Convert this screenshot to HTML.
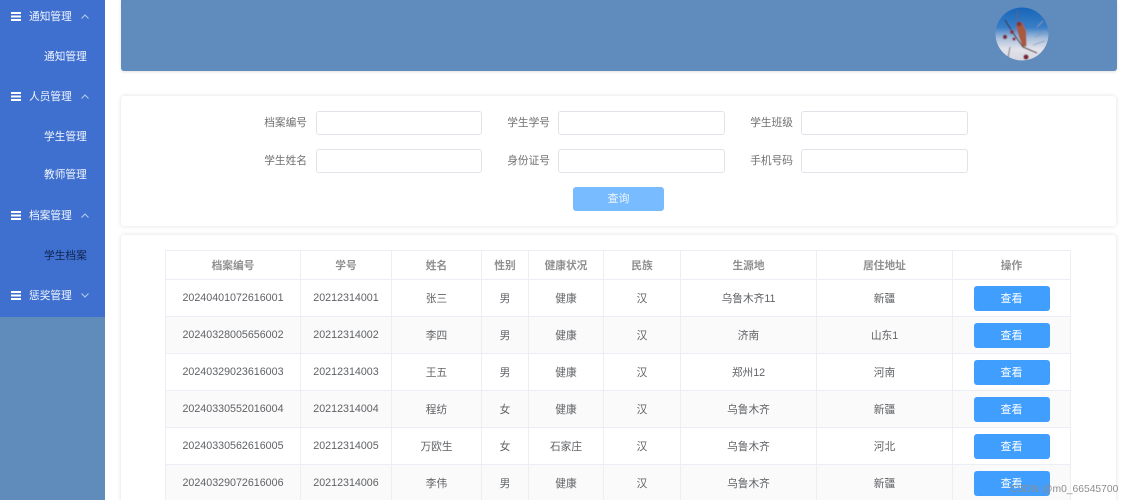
<!DOCTYPE html>
<html lang="zh">
<head>
<meta charset="utf-8">
<title>学生档案</title>
<style>
html,body{margin:0;padding:0;width:1127px;height:500px;overflow:hidden;background:#fff}
body{position:relative;font-family:"Liberation Sans","Noto Sans CJK SC",sans-serif;font-size:10.7px;color:#666}
.a{position:absolute}
.side{left:0;top:0;width:104.5px;height:500px;background:#5f8cbb}
.menu{left:0;top:0;width:104.5px;height:317px;background:#3f70d0}
.m{position:absolute;color:#f2f6fd;line-height:16px;white-space:nowrap}
.ic{position:absolute;left:11px;width:10px;height:9px}
.ar{position:absolute;left:81px;width:8px;height:5px}
.top{left:121px;top:0;width:996px;height:71px;background:#5f8bbd;border-radius:0 0 3px 3px;box-shadow:0 1px 3px rgba(0,0,0,.12)}
.card{left:121px;width:995px;background:#fff;border-radius:3px;box-shadow:0 0 5px rgba(0,0,0,.13)}
.lb{position:absolute;color:#707070;line-height:16px;white-space:nowrap;text-align:right;width:60px}
.in{position:absolute;width:165px;height:22px;border:1px solid #e0e3e8;border-radius:3px;background:#fff}
.btn{left:573px;top:187px;width:91px;height:24px;line-height:25px;text-align:center;background:#79bbff;color:#eef6ff;border-radius:3px;font-size:11px}
table{position:absolute;left:165px;top:250px;border-collapse:collapse;table-layout:fixed;width:905px;font-size:10.7px;color:#666}
th,td{border:1px solid #ebeef5;text-align:center;padding:0;white-space:nowrap;overflow:hidden}
th{height:28px;font-weight:bold;color:#8f8f8f;background:#fff}
td{height:36px;color:#606266}
tr.s td{background:#fafafa}
.v{display:block;position:relative;width:76px;height:25px;line-height:26px;margin:0 auto;background:#409eff;color:#fff;border-radius:3px;font-size:11px}
.wm{left:1010px;top:482.5px;font-size:10.3px;color:#8d8d8d;white-space:nowrap;line-height:14px}
</style>
</head>
<body>
<div class="a side"></div>
<div class="a menu">
  <svg class="ic" style="top:12px" viewBox="0 0 10 9"><path d="M0 0h10v2H0zM0 3.500h10v2H0zM0 7h10v2H0z" fill="#fff"/></svg>
  <div class="m" style="left:29px;top:9px">通知管理</div>
  <svg class="ar" style="top:14px" viewBox="0 0 8 5"><path d="M.5 4.500 4 1l3.500 3.500" fill="none" stroke="#b8ccf0"/></svg>
  <div class="m" style="left:44px;top:49px">通知管理</div>

  <svg class="ic" style="top:92px" viewBox="0 0 10 9"><path d="M0 0h10v2H0zM0 3.500h10v2H0zM0 7h10v2H0z" fill="#fff"/></svg>
  <div class="m" style="left:29px;top:89px">人员管理</div>
  <svg class="ar" style="top:94px" viewBox="0 0 8 5"><path d="M.5 4.500 4 1l3.500 3.500" fill="none" stroke="#b8ccf0"/></svg>
  <div class="m" style="left:44px;top:129px">学生管理</div>
  <div class="m" style="left:44px;top:167px">教师管理</div>

  <svg class="ic" style="top:211px" viewBox="0 0 10 9"><path d="M0 0h10v2H0zM0 3.500h10v2H0zM0 7h10v2H0z" fill="#fff"/></svg>
  <div class="m" style="left:29px;top:208px">档案管理</div>
  <svg class="ar" style="top:213px" viewBox="0 0 8 5"><path d="M.5 4.500 4 1l3.500 3.500" fill="none" stroke="#b8ccf0"/></svg>
  <div class="m" style="left:44px;top:248px;color:#10244f">学生档案</div>

  <svg class="ic" style="top:291px" viewBox="0 0 10 9"><path d="M0 0h10v2H0zM0 3.500h10v2H0zM0 7h10v2H0z" fill="#fff"/></svg>
  <div class="m" style="left:29px;top:288px">惩奖管理</div>
  <svg class="ar" style="top:293px" viewBox="0 0 8 5"><path d="M.5 .5 4 4l3.500-3.500" fill="none" stroke="#b8ccf0"/></svg>
</div>

<div class="a top"></div>
<svg class="a" style="left:995px;top:7px" width="54" height="54" viewBox="0 0 54 54">
  <defs>
    <clipPath id="c"><circle cx="27" cy="27" r="26.500"/></clipPath>
    <linearGradient id="g" x1="0" y1="0" x2="0" y2="1">
      <stop offset="0" stop-color="#1565b8"/>
      <stop offset=".38" stop-color="#3a7ec6"/>
      <stop offset=".58" stop-color="#a9bfdc"/>
      <stop offset=".78" stop-color="#e3e3ea"/>
      <stop offset="1" stop-color="#d5d6df"/>
    </linearGradient>
    <filter id="b"><feGaussianBlur stdDeviation=".5"/></filter>
  </defs>
  <g clip-path="url(#c)">
    <g filter="url(#b)">
    <rect width="54" height="54" fill="url(#g)"/>
    <path d="M40 30 50 24M38 38 50 34M42 20 48 14" fill="none" stroke="#8496b8" stroke-width=".9"/>
    <path d="M15 40 13 51M23 3 22 13" fill="none" stroke="#6a5a68" stroke-width=".9"/>
    <path d="M10 13 18 26 28 40 42 46" fill="none" stroke="#3d2a34" stroke-width="1.100"/>
    <path d="M21 18l6-3 4 9 .5 15-3.500 1-4-10z" fill="#a85a40"/>
    <circle cx="24" cy="17" r="2.500" fill="#7a3c3a"/>
    <circle cx="10" cy="30" r="2.200" fill="#7a2c40"/><circle cx="17" cy="25" r="2" fill="#8a3344"/>
    <circle cx="31" cy="50" r="2.600" fill="#7c2034"/><circle cx="19" cy="32" r="1.600" fill="#8a3344"/>
    </g>
  </g>
</svg>

<div class="a card" style="top:96px;height:130px"></div>
<div class="lb" style="left:247px;top:115px">档案编号</div>
<div class="in" style="left:316px;top:111px;width:164px"></div>
<div class="lb" style="left:490px;top:115px">学生学号</div>
<div class="in" style="left:558px;top:111px"></div>
<div class="lb" style="left:733px;top:115px">学生班级</div>
<div class="in" style="left:801px;top:111px"></div>
<div class="lb" style="left:247px;top:153px">学生姓名</div>
<div class="in" style="left:316px;top:149px;width:164px"></div>
<div class="lb" style="left:490px;top:153px">身份证号</div>
<div class="in" style="left:558px;top:149px"></div>
<div class="lb" style="left:733px;top:153px">手机号码</div>
<div class="in" style="left:801px;top:149px"></div>
<div class="a btn">查询</div>

<div class="a card" style="top:235px;height:275px"></div>
<table>
<colgroup><col style="width:135px"><col style="width:91px"><col style="width:90px"><col style="width:47px"><col style="width:75px"><col style="width:77px"><col style="width:136px"><col style="width:136px"><col style="width:118px"></colgroup>
<tr><th>档案编号</th><th>学号</th><th>姓名</th><th>性别</th><th>健康状况</th><th>民族</th><th>生源地</th><th>居住地址</th><th>操作</th></tr>
<tr><td>20240401072616001</td><td>20212314001</td><td>张三</td><td>男</td><td>健康</td><td>汉</td><td>乌鲁木齐11</td><td>新疆</td><td><span class="v">查看</span></td></tr>
<tr class="s"><td>20240328005656002</td><td>20212314002</td><td>李四</td><td>男</td><td>健康</td><td>汉</td><td>济南</td><td>山东1</td><td><span class="v">查看</span></td></tr>
<tr><td>20240329023616003</td><td>20212314003</td><td>王五</td><td>男</td><td>健康</td><td>汉</td><td>郑州12</td><td>河南</td><td><span class="v">查看</span></td></tr>
<tr class="s"><td>20240330552016004</td><td>20212314004</td><td>程纺</td><td>女</td><td>健康</td><td>汉</td><td>乌鲁木齐</td><td>新疆</td><td><span class="v">查看</span></td></tr>
<tr><td>20240330562616005</td><td>20212314005</td><td>万欧生</td><td>女</td><td>石家庄</td><td>汉</td><td>乌鲁木齐</td><td>河北</td><td><span class="v">查看</span></td></tr>
<tr class="s"><td>20240329072616006</td><td>20212314006</td><td>李伟</td><td>男</td><td>健康</td><td>汉</td><td>乌鲁木齐</td><td>新疆</td><td><span class="v">查看</span></td></tr>
</table>
<div class="a wm">CSDN @m0_66545700</div>
</body>
</html>
